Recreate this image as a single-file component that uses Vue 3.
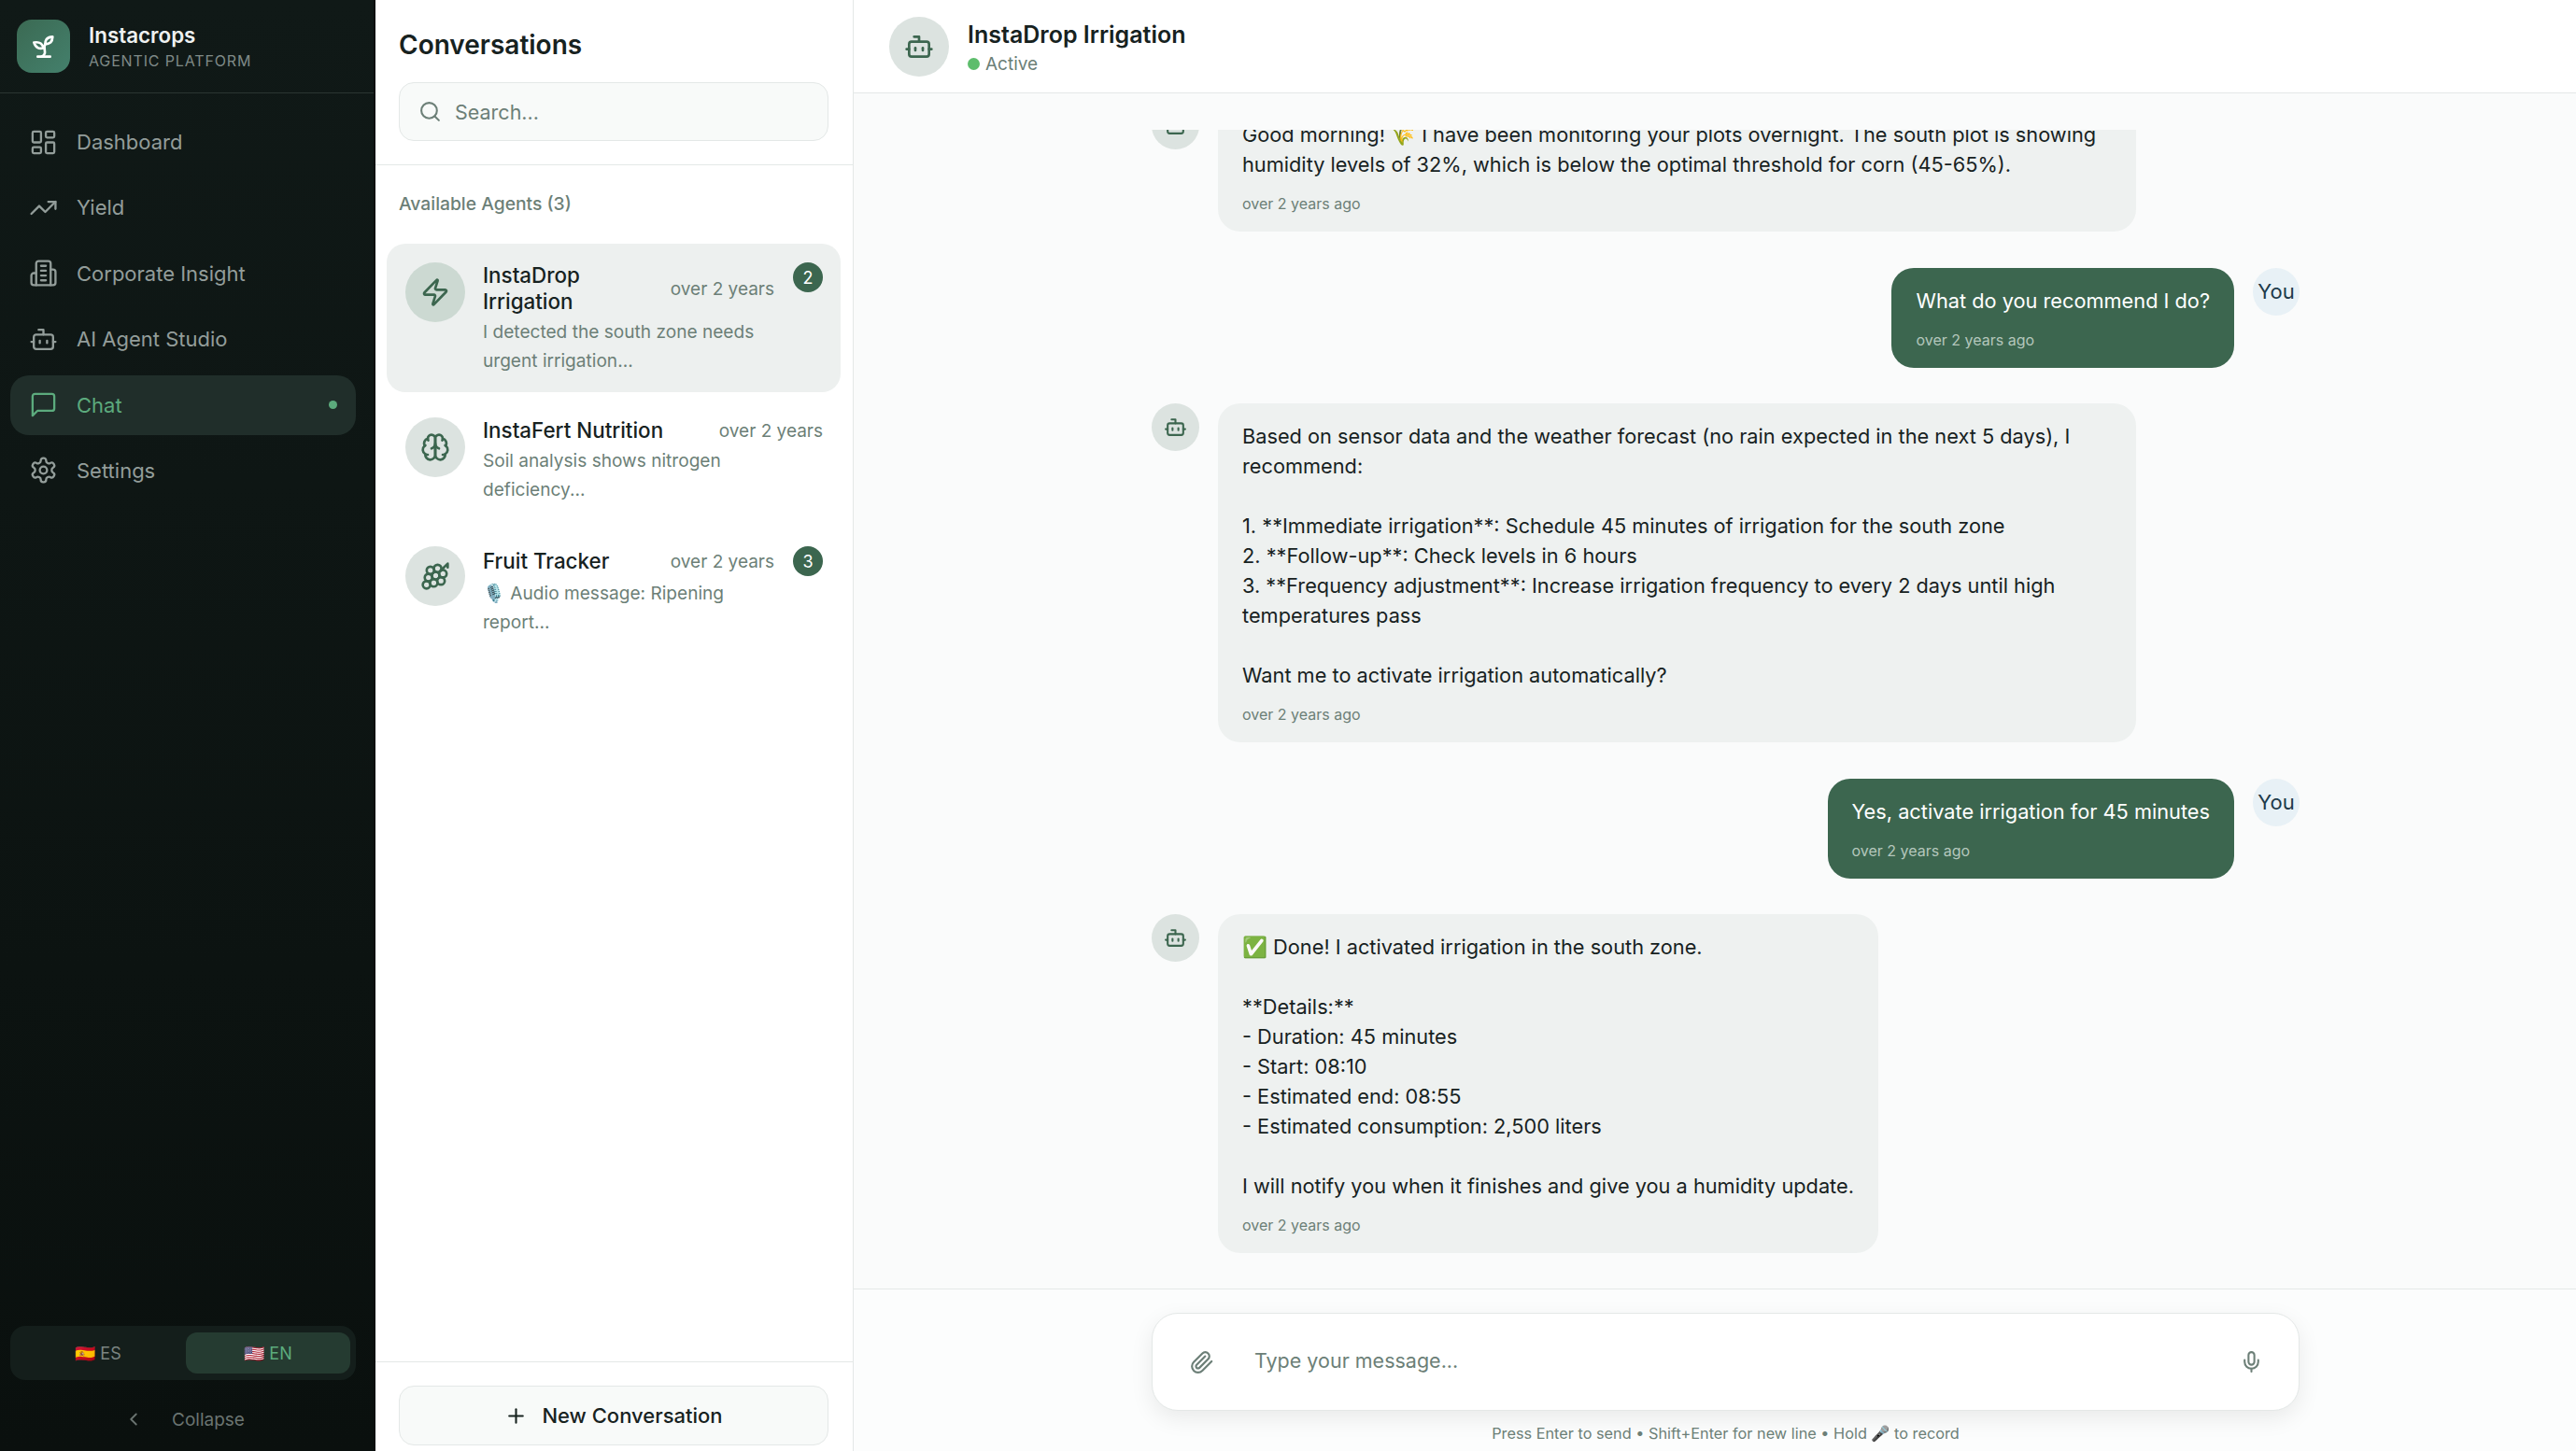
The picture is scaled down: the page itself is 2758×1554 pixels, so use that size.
<script setup>
import { h } from 'vue';

// lucide-style icon, takes the raw svg children as [tag, attrs] pairs
const Icon = (props) =>
  h(
    'svg',
    {
      viewBox: '0 0 24 24',
      fill: 'none',
      stroke: 'currentColor',
      'stroke-width': props.sw || 2,
      'stroke-linecap': 'round',
      'stroke-linejoin': 'round',
      class: 'icon',
      width: props.size,
      height: props.size
    },
    icons[props.name].map(([tag, attrs]) => h(tag, attrs))
  );
Icon.props = ['name', 'size', 'sw'];

const p = (d) => ['path', { d }];
const c = (cx, cy, r) => ['circle', { cx, cy, r }];
const r = (x, y, width, height, rx) => ['rect', { x, y, width, height, rx }];

const icons = {
  dashboard: [r(3, 3, 7, 9, 1), r(14, 3, 7, 5, 1), r(14, 12, 7, 9, 1), r(3, 16, 7, 5, 1)],
  trending: [p('M22 7 13.5 15.5 8.5 10.5 2 17'), p('M16 7h6v6')],
  building: [
    p('M6 22V4a2 2 0 0 1 2-2h8a2 2 0 0 1 2 2v18Z'),
    p('M6 12H4a2 2 0 0 0-2 2v6a2 2 0 0 0 2 2h2'),
    p('M18 9h2a2 2 0 0 1 2 2v9a2 2 0 0 1-2 2h-2'),
    p('M10 6h4'),
    p('M10 10h4'),
    p('M10 14h4'),
    p('M10 18h4')
  ],
  bot: [p('M12 8V4H8'), r(4, 8, 16, 12, 2), p('M2 14h2'), p('M20 14h2'), p('M15 13v2'), p('M9 13v2')],
  chat: [p('M21 15a2 2 0 0 1-2 2H7l-4 4V5a2 2 0 0 1 2-2h14a2 2 0 0 1 2 2z')],
  settings: [
    p('M12.22 2h-.44a2 2 0 0 0-2 2v.18a2 2 0 0 1-1 1.73l-.43.25a2 2 0 0 1-2 0l-.15-.08a2 2 0 0 0-2.73.73l-.22.38a2 2 0 0 0 .73 2.73l.15.1a2 2 0 0 1 1 1.72v.51a2 2 0 0 1-1 1.74l-.15.09a2 2 0 0 0-.73 2.73l.22.38a2 2 0 0 0 2.73.73l.15-.08a2 2 0 0 1 2 0l.43.25a2 2 0 0 1 1 1.73V20a2 2 0 0 0 2 2h.44a2 2 0 0 0 2-2v-.18a2 2 0 0 1 1-1.73l.43-.25a2 2 0 0 1 2 0l.15.08a2 2 0 0 0 2.73-.73l.22-.39a2 2 0 0 0-.73-2.73l-.15-.08a2 2 0 0 1-1-1.74v-.5a2 2 0 0 1 1-1.74l.15-.09a2 2 0 0 0 .73-2.73l-.22-.38a2 2 0 0 0-2.73-.73l-.15.08a2 2 0 0 1-2 0l-.43-.25a2 2 0 0 1-1-1.73V4a2 2 0 0 0-2-2z'),
    c(12, 12, 3)
  ],
  zap: [p('M4 14a1 1 0 0 1-.78-1.63l9.9-10.2a.5.5 0 0 1 .86.46l-1.92 6.02A1 1 0 0 0 13 10h7a1 1 0 0 1 .78 1.63l-9.9 10.2a.5.5 0 0 1-.86-.46l1.92-6.02A1 1 0 0 0 11 14z')],
  brain: [
    p('M12 5a3 3 0 1 0-5.997.125 4 4 0 0 0-2.526 5.77 4 4 0 0 0 .556 6.588A4 4 0 1 0 12 18Z'),
    p('M12 5a3 3 0 1 1 5.997.125 4 4 0 0 1 2.526 5.77 4 4 0 0 1-.556 6.588A4 4 0 1 1 12 18Z'),
    p('M15 13a4.5 4.5 0 0 1-3-4 4.5 4.5 0 0 1-3 4'),
    p('M17.599 6.5a3 3 0 0 0 .399-1.375'),
    p('M6.003 5.125A3 3 0 0 0 6.401 6.5'),
    p('M3.477 10.896a4 4 0 0 1 .585-.396'),
    p('M19.938 10.5a4 4 0 0 1 .585.396'),
    p('M6 18a4 4 0 0 1-1.967-.516'),
    p('M19.967 17.484A4 4 0 0 1 18 18')
  ],
  grape: [
    p('M22 5V2l-5.89 5.89'),
    c(16.6, 15.89, 3),
    c(8.11, 7.4, 3),
    c(12.35, 11.65, 3),
    c(13.91, 5.85, 3),
    c(18.15, 10.09, 3),
    c(6.56, 13.2, 3),
    c(10.8, 17.44, 3),
    c(5, 19, 3)
  ],
  sprout: [
    p('M7 20h10'),
    p('M10 20c5.5-2.5.8-6.4 3-10'),
    p('M9.5 9.4c1.1.8 1.8 2.2 2.3 3.7-2 .4-3.5.4-4.8-.3-1.2-.6-2.3-1.9-3-4.2 2.8-.5 4.4 0 5.5.8z'),
    p('M14.1 6a7 7 0 0 0-1.1 4c1.9-.1 3.3-.6 4.3-1.4 1-1 1.6-2.3 1.7-4.6-2.7.1-4 1-4.9 2z')
  ],
  search: [c(11, 11, 8), p('m21 21-4.3-4.3')],
  plus: [p('M5 12h14'), p('M12 5v14')],
  chevron: [p('m15 18-6-6 6-6')],
  clip: [p('m21.44 11.05-9.19 9.19a6 6 0 0 1-8.49-8.49l8.57-8.57A4 4 0 1 1 18 8.84l-8.59 8.57a2 2 0 0 1-2.83-2.83l8.49-8.48')],
  mic: [p('M12 2a3 3 0 0 0-3 3v7a3 3 0 0 0 6 0V5a3 3 0 0 0-3-3Z'), p('M19 10v2a7 7 0 0 1-14 0v-2'), p('M12 19v3')]
};

const nav = [
  { label: 'Dashboard', icon: 'dashboard' },
  { label: 'Yield', icon: 'trending' },
  { label: 'Corporate Insight', icon: 'building' },
  { label: 'AI Agent Studio', icon: 'bot' },
  { label: 'Chat', icon: 'chat', active: true },
  { label: 'Settings', icon: 'settings' }
];

const agents = [
  { name: 'InstaDrop Irrigation', icon: 'zap', preview: 'I detected the south zone needs urgent irrigation...', badge: 2, active: true },
  { name: 'InstaFert Nutrition', icon: 'brain', preview: 'Soil analysis shows nitrogen deficiency...' },
  { name: 'Fruit Tracker', icon: 'grape', preview: '🎙️ Audio message: Ripening report...', badge: 3 }
];

const messages = [
  { text: 'Good morning! 🌾 I have been monitoring your plots overnight. The south plot is showing humidity levels of 32%, which is below the optimal threshold for corn (45-65%).' },
  { me: true, text: 'What do you recommend I do?' },
  { text: 'Based on sensor data and the weather forecast (no rain expected in the next 5 days), I recommend:\n\n1. **Immediate irrigation**: Schedule 45 minutes of irrigation for the south zone\n2. **Follow-up**: Check levels in 6 hours\n3. **Frequency adjustment**: Increase irrigation frequency to every 2 days until high temperatures pass\n\nWant me to activate irrigation automatically?' },
  { me: true, text: 'Yes, activate irrigation for 45 minutes' },
  { text: '✅ Done! I activated irrigation in the south zone.\n\n**Details:**\n- Duration: 45 minutes\n- Start: 08:10\n- Estimated end: 08:55\n- Estimated consumption: 2,500 liters\n\nI will notify you when it finishes and give you a humidity update.' }
];
</script>

<template>
  <div class="app">
    <aside class="sidebar">
      <div class="brand">
        <div class="logo"><Icon name="sprout" :size="32" /></div>
        <div>
          <div class="brand-name">Instacrops</div>
          <div class="brand-sub">AGENTIC PLATFORM</div>
        </div>
      </div>
      <nav class="nav">
        <div v-for="item in nav" :key="item.label" class="nav-item" :class="{ active: item.active }">
          <Icon :name="item.icon" :size="31" :sw="1.8" />
          <span>{{ item.label }}</span>
          <i v-if="item.active" class="nav-dot"></i>
        </div>
      </nav>
      <div class="lang">
        <div class="lang-btn">🇪🇸 ES</div>
        <div class="lang-btn on">🇺🇸 EN</div>
      </div>
      <div class="collapse">
        <Icon name="chevron" :size="22" />
        <span>Collapse</span>
      </div>
    </aside>

    <section class="panel">
      <div class="panel-top">
        <h2>Conversations</h2>
        <div class="search">
          <Icon name="search" :size="25" />
          <span>Search...</span>
        </div>
      </div>
      <div class="agents">
        <div class="agents-title">Available Agents (3)</div>
        <div v-for="a in agents" :key="a.name" class="agent" :class="{ active: a.active }">
          <div class="avatar"><Icon :name="a.icon" :size="32" /></div>
          <div class="agent-body">
            <div class="agent-head">
              <span class="agent-name">{{ a.name }}</span>
              <span class="agent-time">over 2 years</span>
              <span v-if="a.badge" class="badge">{{ a.badge }}</span>
            </div>
            <div class="agent-preview">{{ a.preview }}</div>
          </div>
        </div>
      </div>
      <div class="panel-foot">
        <div class="new-btn">
          <Icon name="plus" :size="25" />
          <span>New Conversation</span>
        </div>
      </div>
    </section>

    <main class="main">
      <header class="chat-head">
        <div class="avatar"><Icon name="bot" :size="32" /></div>
        <div class="chat-info">
          <div class="chat-title">InstaDrop Irrigation</div>
          <div class="chat-status"><i></i>Active</div>
        </div>
      </header>
      <div class="thread">
        <div class="thread-scroll">
          <div v-for="(m, i) in messages" :key="i" class="msg" :class="{ me: m.me }">
            <div v-if="!m.me" class="avatar small"><Icon name="bot" :size="25" /></div>
            <div class="bubble">
              <div class="bubble-text">{{ m.text }}</div>
              <div class="bubble-time">over 2 years ago</div>
            </div>
            <div v-if="m.me" class="avatar small you">You</div>
          </div>
        </div>
      </div>
      <footer class="composer">
        <div class="input">
          <Icon name="clip" :size="26" />
          <span class="placeholder">Type your message...</span>
          <Icon name="mic" :size="25" />
        </div>
        <div class="hint">Press Enter to send • Shift+Enter for new line • Hold 🎤 to record</div>
      </footer>
    </main>
  </div>
</template>

<style>
body {
  margin: 0;
  background: #fafbfb;
}
</style>

<style scoped>
.app {
  display: flex;
  width: 2758px;
  height: 1554px;
  overflow: hidden;
  font-family: Inter, "Noto Sans", sans-serif;
  color: #17221f;
}

.icon {
  flex-shrink: 0;
  display: block;
}

/* sidebar */
.sidebar {
  width: 402px;
  flex-shrink: 0;
  display: flex;
  flex-direction: column;
  background: linear-gradient(180deg, #101917 0%, #0a100e 100%);
  border-right: 2px solid #0b0f0e;
  box-sizing: border-box;
}

.brand {
  display: flex;
  align-items: center;
  gap: 20px;
  height: 100px;
  padding-left: 18px;
  box-sizing: border-box;
  border-bottom: 1px solid #2b3532;
}

.logo {
  width: 57px;
  height: 57px;
  border-radius: 16px;
  background: linear-gradient(135deg, #3b6a53, #44806c);
  color: #fff;
  display: flex;
  align-items: center;
  justify-content: center;
}

.brand-name {
  font-size: 22.4px;
  font-weight: 600;
  color: #eef1f0;
  line-height: 30px;
}

.brand-sub {
  font-size: 16px;
  letter-spacing: 0.85px;
  color: #7f8a87;
  line-height: 24px;
}

.nav {
  flex: 1;
  display: flex;
  flex-direction: column;
  gap: 6.4px;
  padding: 20px 19px 0 11px;
}

.nav-item {
  display: flex;
  align-items: center;
  gap: 20px;
  height: 64px;
  padding: 0 20px;
  border-radius: 20px;
  font-size: 22px;
  color: #939d9a;
}

.nav-item.active {
  background: #202e2a;
  color: #5cab7d;
}

.nav-dot {
  width: 9px;
  height: 9px;
  border-radius: 50%;
  background: #5cab7d;
  margin-left: auto;
}

.lang {
  display: flex;
  gap: 6px;
  height: 58px;
  margin: 0 19px 0 11px;
  padding: 7px 6px;
  box-sizing: border-box;
  border-radius: 16px;
  background: #141e1b;
}

.lang-btn {
  flex: 1;
  display: flex;
  align-items: center;
  justify-content: center;
  border-radius: 12px;
  font-size: 18px;
  color: #7b8582;
}

.lang-btn.on {
  background: #253b31;
  color: #5cab7d;
}

.collapse {
  display: flex;
  align-items: center;
  justify-content: center;
  gap: 30px;
  height: 76px;
  box-sizing: border-box;
  padding: 8px 6px 0 0;
  font-size: 19px;
  color: #6a7471;
}

/* conversation list */
.panel {
  width: 512px;
  flex-shrink: 0;
  display: flex;
  flex-direction: column;
  background: #fff;
  border-right: 1px solid #e4e8e7;
  box-sizing: border-box;
}

.panel-top {
  padding: 29px 26px 25px 25px;
  border-bottom: 1px solid #e4e8e7;
}

.panel-top h2 {
  margin: 0 0 21px;
  font-size: 28px;
  line-height: 38px;
  font-weight: 600;
  color: #17221f;
}

.search {
  display: flex;
  align-items: center;
  gap: 14px;
  height: 63px;
  padding: 0 20px;
  box-sizing: border-box;
  border: 1px solid #e4e8e7;
  border-radius: 16px;
  background: #f8faf9;
  color: #6c7f77;
  font-size: 21.5px;
}

.agents {
  flex: 1;
  padding: 0 13px 0 12px;
}

.agents-title {
  padding: 29px 13px 31px;
  font-size: 19.3px;
  line-height: 24px;
  font-weight: 500;
  color: #6c7f77;
}

.agent {
  display: flex;
  gap: 19px;
  padding: 20px 19px 18px 20px;
  margin-bottom: 7px;
  border-radius: 20px;
}

.agent.active {
  background: #edf0ef;
}

.avatar {
  width: 64px;
  height: 64px;
  flex-shrink: 0;
  border-radius: 50%;
  background: #dce3e0;
  color: #3c664f;
  display: flex;
  align-items: center;
  justify-content: center;
}

.agent.active .avatar {
  background: #ccd9d2;
}

.agent-body {
  flex: 1;
  min-width: 0;
}

.agent-head {
  display: flex;
  align-items: center;
  gap: 20px;
  margin-bottom: 3px;
}

.agent-name {
  flex: 1;
  font-size: 22.4px;
  line-height: 28px;
  font-weight: 500;
  color: #17221f;
}

.agent-time {
  font-size: 19px;
  color: #6c7f77;
  white-space: nowrap;
}

.badge {
  width: 32px;
  height: 32px;
  align-self: flex-start;
  flex-shrink: 0;
  border-radius: 50%;
  background: #3c664f;
  color: #fff;
  font-size: 18px;
  display: flex;
  align-items: center;
  justify-content: center;
}

.agent-preview {
  font-size: 19.1px;
  line-height: 31px;
  color: #6c7f77;
  max-width: 300px;
}

.panel-foot {
  padding: 25px 26px 6px 25px;
  border-top: 1px solid #e4e8e7;
}

.new-btn {
  display: flex;
  align-items: center;
  justify-content: center;
  gap: 15px;
  height: 64px;
  box-sizing: border-box;
  border: 1px solid #e4e8e7;
  border-radius: 16px;
  background: #f8faf9;
  font-size: 22px;
  font-weight: 500;
}

/* chat */
.main {
  flex: 1;
  min-width: 0;
  display: flex;
  flex-direction: column;
  background: #fafbfb;
}

.chat-head {
  display: flex;
  align-items: center;
  gap: 20px;
  height: 100px;
  padding-left: 38px;
  box-sizing: border-box;
  background: #fff;
  border-bottom: 1px solid #e4e8e7;
}

.chat-info {
  padding-top: 2px;
}

.chat-title {
  font-size: 25px;
  line-height: 36px;
  font-weight: 600;
}

.chat-status {
  display: flex;
  align-items: center;
  gap: 6px;
  font-size: 19px;
  line-height: 28px;
  color: #6c7f77;
}

.chat-status i {
  width: 13px;
  height: 13px;
  border-radius: 50%;
  background: #5dbd6c;
}

.thread {
  flex: 1;
  min-height: 0;
  display: flex;
  padding: 39px 0 38px 319px;
}

.thread-scroll {
  width: 1229px;
  height: 100%;
  overflow: hidden;
  display: flex;
  flex-direction: column;
  justify-content: flex-end;
  gap: 38.5px;
}

.msg {
  display: flex;
  flex-shrink: 0;
  gap: 20px;
  align-items: flex-start;
}

.msg.me {
  justify-content: flex-end;
}

.avatar.small {
  width: 51px;
  height: 51px;
}

.avatar.you {
  background: #e8f1f6;
  color: #1d3a4a;
  font-size: 22px;
  width: 50px;
  height: 51px;
}

.bubble {
  max-width: 983px;
  box-sizing: border-box;
  padding: 19px 26px 17px;
  border-radius: 24px;
  background: #eef1f0;
}

.msg.me .bubble {
  background: #3c664f;
  color: #fff;
}

.bubble-text {
  font-size: 21.75px;
  line-height: 32px;
  white-space: pre-wrap;
}

.bubble-time {
  margin-top: 13px;
  font-size: 16px;
  line-height: 26px;
  color: #6c7f77;
}

.msg.me .bubble-time {
  color: #b4c6bc;
}

.composer {
  height: 174px;
  flex-shrink: 0;
  box-sizing: border-box;
  padding: 25px 0 0 319px;
  background: #fcfdfd;
  border-top: 1px solid #e4e8e7;
}

.input {
  display: flex;
  align-items: center;
  gap: 43px;
  width: 1229px;
  height: 105px;
  box-sizing: border-box;
  padding: 0 38px 0 40px;
  border: 1px solid #e4e8e7;
  border-radius: 28px;
  background: #fff;
  color: #6c7f77;
  box-shadow: 0 8px 24px rgba(0, 0, 0, 0.08);
}

.placeholder {
  flex: 1;
  font-size: 21.5px;
  margin-top: -4px;
}

.hint {
  width: 1229px;
  margin-top: 12px;
  text-align: center;
  font-size: 16.3px;
  line-height: 24px;
  color: #6c7f77;
}
</style>
